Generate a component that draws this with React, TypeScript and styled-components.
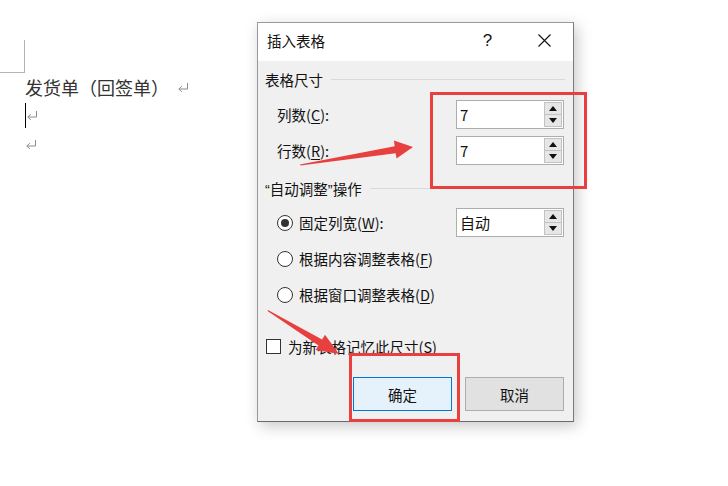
import styled, { createGlobalStyle } from "styled-components";

const GlobalStyle = createGlobalStyle`
  html, body {
    margin: 0;
    padding: 0;
    background: #fff;
  }
  body {
    font-family: "Noto Sans CJK SC", "Noto Sans", sans-serif;
  }
`;

const Page = styled.div`
  position: relative;
  width: 728px;
  height: 486px;
  overflow: hidden;
  background: #fff;
`;

// 문서 영역
const Doc = styled.div`
  padding-top: 40px;
  color: #333;
  font-size: 18px;
`;

const CornerMark = styled.div`
  width: 24px;
  height: 32px;
  border-right: 1px solid #b4b4b4;
  border-bottom: 1px solid #b4b4b4;
`;

const Para = styled.div`
  height: 28.5px;
  line-height: 28.5px;
  padding-left: 25px;
  display: flex;
  align-items: center;
  white-space: nowrap;
`;

const Caret = styled.span`
  display: inline-block;
  width: 1px;
  height: 25px;
  background: #000;
  margin-right: -1px;
`;

const ReturnMark = ({ gap = 0 }: { gap?: number }) => (
  <svg width="12" height="11" viewBox="0 0 12 11" style={{ marginLeft: gap }}>
    <path d="M10.5 1 V7 H2 M4.8 4.2 L1.8 7 L4.8 9.8" fill="none" stroke="#8c8c8c" strokeWidth="1" />
  </svg>
);

// 대화상자
const Dialog = styled.div`
  position: absolute;
  left: 257px;
  top: 22px;
  width: 315px;
  height: 398px;
  border: 1px solid #9a9a9a;
  border-bottom-color: #6a6a6a;
  border-right-color: #7a7a7a;
  background: #f0f0f0;
  box-shadow: 3px 4px 14px rgba(0, 0, 0, 0.22);
  display: flex;
  flex-direction: column;
  font-size: 14.5px;
  color: #111;
`;

const TitleBar = styled.div`
  height: 35px;
  padding-bottom: 3px;
  background: #fff;
  display: flex;
  align-items: center;
  padding-left: 9px;
  font-size: 14.5px;
`;

const TitleText = styled.div`
  flex: 1;
`;

const TitleButton = styled.div`
  width: 57px;
  display: flex;
  justify-content: center;
  align-items: center;
  font-family: "Liberation Sans", sans-serif;
  font-size: 17px;
`;

const Body = styled.div`
  flex: 1;
  display: flex;
  flex-direction: column;
  padding: 8px 9px 10px 0;
`;

const GroupHeader = styled.div<{ $top: number; $left: number }>`
  height: 20px;
  margin-top: ${(p) => p.$top}px;
  padding-left: ${(p) => p.$left}px;
  display: flex;
  align-items: center;
  gap: 8px;
  &::after {
    content: "";
    flex: 1;
    height: 1px;
    background: #dadada;
    margin-right: -1px;
  }
`;

const Quote = styled.span`
  font-family: "Liberation Sans", sans-serif;
`;

const FieldRow = styled.div<{ $top: number }>`
  height: 29px;
  margin-top: ${(p) => p.$top}px;
  padding-left: 19px;
  display: flex;
  align-items: center;
  justify-content: space-between;
`;

const OptionLabel = styled.label`
  display: flex;
  align-items: center;
  gap: 6px;
`;

const Radio = styled.span<{ $checked?: boolean }>`
  width: 14px;
  height: 14px;
  border: 1px solid #333;
  border-radius: 50%;
  background: #fff;
  display: flex;
  align-items: center;
  justify-content: center;
  &::after {
    content: "";
    width: 8px;
    height: 8px;
    border-radius: 50%;
    background: ${(p) => (p.$checked ? "#333" : "transparent")};
  }
`;

const CheckRow = styled.div`
  height: 20px;
  margin-top: 27px;
  padding-left: 8px;
  display: flex;
  align-items: center;
  gap: 7px;
`;

const CheckBox = styled.span`
  width: 13px;
  height: 13px;
  border: 1px solid #333;
  background: #fff;
`;

const Key = styled.span`
  text-decoration: underline;
  text-underline-offset: 2px;
`;

const SpinBox = styled.div`
  width: 106px;
  height: 27px;
  border: 1px solid #adadad;
  background: #fff;
  display: flex;
  align-items: center;
`;

const SpinValue = styled.div`
  flex: 1;
  padding-left: 3px;
  font-size: 15px;
`;

const SpinButtons = styled.div`
  width: 18px;
  height: 25px;
  margin-right: 1px;
  display: flex;
  flex-direction: column;
`;

const SpinButton = styled.div`
  flex: 1;
  background: #e6e6e6;
  border: 1px solid #c2c2c2;
  display: flex;
  align-items: center;
  justify-content: center;
  & + & {
    border-top: none;
  }
`;

const Arrow = ({ up }: { up?: boolean }) => (
  <svg width="8" height="5" viewBox="0 0 8 5">
    <path d={up ? "M0 5 L4 0 L8 5 Z" : "M0 0 L8 0 L4 5 Z"} fill="#111" />
  </svg>
);

const ButtonRow = styled.div`
  margin-top: 21px;
  display: flex;
  justify-content: flex-end;
  gap: 13px;
`;

const Button = styled.div<{ $primary?: boolean }>`
  width: 97px;
  height: 32px;
  display: flex;
  align-items: center;
  justify-content: center;
  background: ${(p) => (p.$primary ? "#e5f1fb" : "#e1e1e1")};
  border: 1px solid ${(p) => (p.$primary ? "#0078d7" : "#adadad")};
`;

// 주석(빨간 표시)
const Highlight = styled.div<{ $x: number; $y: number; $w: number; $h: number }>`
  position: absolute;
  left: ${(p) => p.$x}px;
  top: ${(p) => p.$y}px;
  width: ${(p) => p.$w}px;
  height: ${(p) => p.$h}px;
  border: 3px solid #e8403e;
  box-sizing: border-box;
  pointer-events: none;
`;

const Overlay = styled.svg`
  position: absolute;
  left: 0;
  top: 0;
  pointer-events: none;
`;

const Spin = ({ value }: { value: string }) => (
  <SpinBox>
    <SpinValue>{value}</SpinValue>
    <SpinButtons>
      <SpinButton>
        <Arrow up />
      </SpinButton>
      <SpinButton>
        <Arrow />
      </SpinButton>
    </SpinButtons>
  </SpinBox>
);

const App = () => {
  return (
    <Page>
      <GlobalStyle />
      <Doc>
        <CornerMark />
        <Para>
          发货单（回签单）
          <ReturnMark gap={8} />
        </Para>
        <Para>
          <Caret />
          <ReturnMark gap={1} />
        </Para>
        <Para>
          <ReturnMark />
        </Para>
      </Doc>

      <Dialog>
        <TitleBar>
          <TitleText>插入表格</TitleText>
          <TitleButton>?</TitleButton>
          <TitleButton>
            <svg width="13" height="13" viewBox="0 0 13 13">
              <path d="M0.5 0.5 L12.5 12.5 M12.5 0.5 L0.5 12.5" stroke="#111" strokeWidth="1.1" />
            </svg>
          </TitleButton>
        </TitleBar>
        <Body>
          <GroupHeader $top={0} $left={7}>表格尺寸</GroupHeader>
          <FieldRow $top={11}>
            <span>
              列数(<Key>C</Key>):
            </span>
            <Spin value="7" />
          </FieldRow>
          <FieldRow $top={7}>
            <span>
              行数(<Key>R</Key>):
            </span>
            <Spin value="7" />
          </FieldRow>
          <GroupHeader $top={13} $left={7}>
            <span>
              <Quote>“</Quote>自动调整<Quote>”</Quote>操作
            </span>
          </GroupHeader>
          <FieldRow $top={10}>
            <OptionLabel>
              <Radio $checked />
              <span>
                固定列宽(<Key>W</Key>):
              </span>
            </OptionLabel>
            <Spin value="自动" />
          </FieldRow>
          <FieldRow $top={7}>
            <OptionLabel>
              <Radio />
              <span>
                根据内容调整表格(<Key>F</Key>)
              </span>
            </OptionLabel>
          </FieldRow>
          <FieldRow $top={7}>
            <OptionLabel>
              <Radio />
              <span>
                根据窗口调整表格(<Key>D</Key>)
              </span>
            </OptionLabel>
          </FieldRow>
          <CheckRow>
            <CheckBox />
            <span>为新表格记忆此尺寸(S)</span>
          </CheckRow>
          <ButtonRow>
            <Button $primary>确定</Button>
            <Button>取消</Button>
          </ButtonRow>
        </Body>
      </Dialog>

      <Highlight $x={430} $y={92} $w={157} $h={97} />
      <Highlight $x={349} $y={353} $w={111} $h={69} />

      <Overlay width="728" height="486" viewBox="0 0 728 486">
        <polygon
          points="300,164.5 394.7,146.2 393.9,140.6 413,147 396.5,158.6 395.7,153.2 300.5,165.5"
          fill="#e8403e"
        />
        <polygon
          points="268,310 322.1,339.4 325,334.7 339,354 315.6,350.1 318.5,345.4 267.5,311"
          fill="#e8403e"
        />
      </Overlay>
    </Page>
  );
};

export default App;
